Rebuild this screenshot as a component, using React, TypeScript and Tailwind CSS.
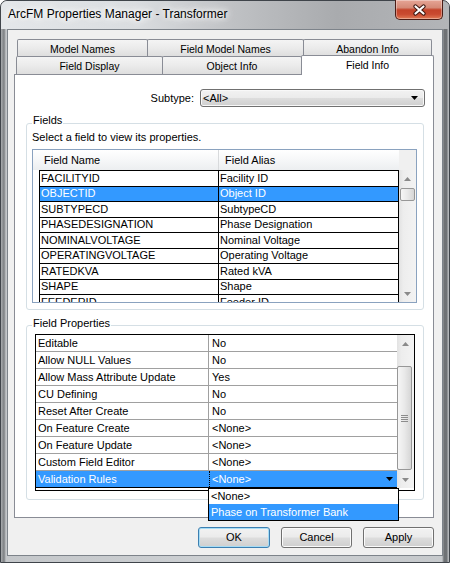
import React from "react";

const fieldRows: [string, string][] = [
  ["FACILITYID", "Facility ID"],
  ["OBJECTID", "Object ID"],
  ["SUBTYPECD", "SubtypeCD"],
  ["PHASEDESIGNATION", "Phase Designation"],
  ["NOMINALVOLTAGE", "Nominal Voltage"],
  ["OPERATINGVOLTAGE", "Operating Voltage"],
  ["RATEDKVA", "Rated kVA"],
  ["SHAPE", "Shape"],
  ["FEEDERID", "Feeder ID"],
];

const propRows: [string, string][] = [
  ["Editable", "No"],
  ["Allow NULL Values", "No"],
  ["Allow Mass Attribute Update", "Yes"],
  ["CU Defining", "No"],
  ["Reset After Create", "No"],
  ["On Feature Create", "<None>"],
  ["On Feature Update", "<None>"],
  ["Custom Field Editor", "<None>"],
  ["Validation Rules", "<None>"],
];

function TriUp({ c = "#8a8a8a" }: { c?: string }) {
  return (
    <svg width="7" height="4" viewBox="0 0 7 4" className="block">
      <path d="M3.5 0L7 4H0Z" fill={c} />
    </svg>
  );
}

function TriDown({ c = "#8a8a8a" }: { c?: string }) {
  return (
    <svg width="7" height="4" viewBox="0 0 7 4" className="block">
      <path d="M0 0H7L3.5 4Z" fill={c} />
    </svg>
  );
}

const tabCls =
  "h-full border border-b-0 border-[#898c95] rounded-t-[2px] bg-[linear-gradient(#f4f4f4,#ebebeb_50%,#dedede)] flex items-center justify-center text-[10.5px] pt-[2px]";

const btnCls =
  "h-[21px] rounded-[3px] border flex items-center justify-center bg-[linear-gradient(#f2f2f2,#ebebeb_48%,#dddddd_52%,#cfcfcf)]";

export default function App() {
  return (
    <div className="w-[450px] h-[563px] bg-white font-['Liberation_Sans',Arial,sans-serif] text-[11px] text-black leading-none select-none">
      <div className="relative w-[450px] h-[563px] rounded-t-[7px] border border-[#3f444a] flex flex-col bg-[linear-gradient(to_right,#a9acaf_0px,#7c7f82_3px,#c4c7ca_5px,#cdd0d3_50%,#c6c9cc_441px,#6f7275_443px,#707376_446px,#b3b6b9_447px)]">
        {/* Title bar */}
        <div className="h-[28px] shrink-0 rounded-t-[6px] bg-[linear-gradient(to_right,#e4e7ea,#dadde0_30%,#bfc1c4_52%,#a9abae_75%,#b3b5b8)] pl-[7px] pt-[6px]">
          <span className="text-[12px] leading-[14px] [text-shadow:0_0_5px_#fff,0_0_9px_#fff,0_0_12px_#fff]">
            ArcFM Properties Manager - Transformer
          </span>
        </div>

        {/* Close button */}
        <div className="absolute -top-px right-[6px] w-[48px] h-[20px] rounded-b-[5px] border border-t-0 border-[#4b1d16] bg-[linear-gradient(#e6a596,#d58a77_40%,#c4432a_52%,#c94a30_75%,#e07a55)] shadow-[inset_0_0_0_1px_rgba(255,255,255,0.35)] flex items-center justify-center">
          <svg width="15" height="12" viewBox="0 0 15 12" className="block">
            <path d="M3.5 2.5L11.5 9.5M11.5 2.5L3.5 9.5" stroke="#3d160f" strokeWidth="4.2" strokeLinecap="round" />
            <path d="M3.5 2.5L11.5 9.5M11.5 2.5L3.5 9.5" stroke="#ffffff" strokeWidth="2.2" strokeLinecap="round" />
          </svg>
        </div>

        {/* Client area */}
        <div className="mx-[6px] w-[436px] h-[527px] border border-[#7d838a] bg-[#f0f0f0] flex flex-col">
          <div className="ml-[6px] mt-[9px] w-[420px] flex flex-col">
            {/* Tab row 1 */}
            <div className="flex h-[17px] ml-[3px]">
              <div className={`w-[131px] ${tabCls}`}>Model Names</div>
              <div className={`w-[157px] -ml-px ${tabCls}`}>Field Model Names</div>
              <div className={`w-[129px] -ml-px ${tabCls}`}>Abandon Info</div>
            </div>
            {/* Tab row 2 */}
            <div className="flex items-end h-[18px] ml-[2px]">
              <div className={`w-[147px] ${tabCls}`}>Field Display</div>
              <div className={`w-[140px] -ml-px ${tabCls}`}>Object Info</div>
              <div className="relative z-10 w-[133px] -ml-px h-[20px] -mb-px border border-b-0 border-[#898c95] rounded-t-[2px] bg-white flex justify-center pt-[4px] text-[10.5px]">
                Field Info
              </div>
            </div>

            {/* Tab panel */}
            <div className="w-[420px] h-[444px] border border-[#898c95] bg-white flex flex-col">
              {/* Subtype */}
              <div className="flex justify-end items-center mt-[14px] pr-[8px]">
                <span className="mr-[6px]">Subtype:</span>
                <div className="w-[225px] h-[18px] border border-[#707070] rounded-[3px] bg-[linear-gradient(#f2f2f2,#ebebeb_48%,#dddddd_52%,#cfcfcf)] shadow-[inset_0_0_0_1px_#f8f8f8] flex items-center justify-between pl-[2px] pr-[6px]">
                  <span>&lt;All&gt;</span>
                  <TriDown c="#000" />
                </div>
              </div>

              {/* Fields group */}
              <div className="relative ml-[11px] mt-[16px] w-[398px] h-[187px] border border-[#d5dfe5] rounded-[3px] pt-[7px] pl-[5px]">
                <span className="absolute left-[5px] -top-[10px] px-[1px] bg-white leading-[13px]">Fields</span>
                <div className="leading-[13px]">Select a field to view its properties.</div>
                <div className="mt-[5px] w-[385px] h-[154px] border border-[#8aa2bf] flex">
                  <div className="w-[366px] flex flex-col">
                    {/* header */}
                    <div className="h-[20px] flex bg-[linear-gradient(#ffffff,#f7f8f9_45%,#eceef0)]">
                      <div className="w-[6px]" />
                      <div className="w-[180px] border-r border-[#d8dadc] pl-[5px] flex items-center">Field Name</div>
                      <div className="flex-1 pl-[6px] flex items-center">Field Alias</div>
                    </div>
                    {/* body */}
                    <div className="h-[132px] overflow-hidden flex">
                      <div className="w-[6px] bg-white" />
                      <div className="w-[360px] border-x border-black">
                        {fieldRows.map(([n, a]) => {
                          const sel = n === "OBJECTID";
                          return (
                            <div
                              key={n}
                              className={`h-[15.5px] border-t border-black flex ${sel ? "bg-[#3399ff] text-white" : "bg-white"}`}
                            >
                              <div className="w-[179px] border-r border-black pl-[1px] flex items-center">{n}</div>
                              <div className="flex-1 pl-[1px] flex items-center">{a}</div>
                            </div>
                          );
                        })}
                      </div>
                    </div>
                  </div>
                  {/* scrollbar */}
                  <div className="w-[17px] flex flex-col">
                    <div className="h-[20px] bg-[#f0f0f0]" />
                    <div className="flex-1 flex flex-col bg-[linear-gradient(to_right,#e2e2e2,#ededed_25%,#f3f3f3)]">
                      <div className="h-[17px] flex items-center justify-center">
                        <TriUp />
                      </div>
                      <div className="mt-[1px] ml-px w-[15px] h-[13px] rounded-[2px] border border-[#979797] bg-[linear-gradient(to_right,#f6f6f6,#e9e9e9_50%,#d6d6d6)]" />
                      <div className="flex-1" />
                      <div className="h-[17px] flex items-center justify-center">
                        <TriDown />
                      </div>
                    </div>
                  </div>
                </div>
              </div>

              {/* Field Properties group */}
              <div className="relative ml-[11px] mt-[15px] w-[398px] h-[175px] border border-[#d5dfe5] rounded-[3px] pt-[8px] pl-[8px]">
                <span className="absolute left-[5px] -top-[9px] px-[1px] bg-white leading-[13px]">Field Properties</span>
                <div className="w-[380px] h-[157px] border border-black bg-white flex flex-col">
                  <div className="h-[153px] flex">
                    <div className="w-[361px] flex flex-col">
                      {propRows.map(([n, v], i) => {
                        const sel = i === propRows.length - 1;
                        if (sel) {
                          return (
                            <div key={n} className="relative h-[17px] border-b border-black flex">
                              <div className="w-[173px] bg-[#3399ff] text-white pl-[2px] flex items-center">{n}</div>
                              <div className="flex-1 bg-[#3399ff] text-white border-l border-dotted border-black pl-[2px] pr-[4px] flex items-center justify-between">
                                <span>{v}</span>
                                <TriDown c="#000" />
                              </div>
                              {/* dropdown list */}
                              <div className="absolute z-20 left-[172px] top-[17px] w-[191px] h-[33px] border border-black bg-white flex flex-col">
                                <div className="h-[15px] pl-[2px] flex items-center">&lt;None&gt;</div>
                                <div className="h-[16px] pl-[2px] bg-[#3399ff] text-white flex items-center">
                                  Phase on Transformer Bank
                                </div>
                              </div>
                            </div>
                          );
                        }
                        return (
                          <div key={n} className="h-[17px] border-b border-[#a0a0a0] flex">
                            <div className="w-[173px] border-r border-[#a0a0a0] pl-[2px] flex items-center">{n}</div>
                            <div className="flex-1 pl-[3px] flex items-center">{v}</div>
                          </div>
                        );
                      })}
                    </div>
                    {/* scrollbar */}
                    <div className="w-[17px] flex flex-col bg-[linear-gradient(to_right,#e2e2e2,#ededed_25%,#f3f3f3)]">
                      <div className="h-[17px] flex items-center justify-center">
                        <TriUp />
                      </div>
                      <div className="h-[14px]" />
                      <div className="w-[15px] h-[104px] rounded-[2px] border border-[#979797] bg-[linear-gradient(to_right,#f6f6f6,#e9e9e9_50%,#d6d6d6)] flex flex-col items-center justify-center gap-[1px]">
                        <div className="w-[7px] h-px bg-[#8c8c8c]" />
                        <div className="w-[7px] h-px bg-[#8c8c8c]" />
                        <div className="w-[7px] h-px bg-[#8c8c8c]" />
                        <div className="w-[7px] h-px bg-[#8c8c8c]" />
                      </div>
                      <div className="flex-1" />
                      <div className="h-[17px] flex items-center justify-center">
                        <TriDown />
                      </div>
                    </div>
                  </div>
                </div>
              </div>
            </div>
          </div>

          {/* Buttons */}
          <div className="mt-[9px] pr-[8px] flex justify-end gap-[11px]">
            <div className={`w-[72px] border-[#3c7fb1] shadow-[inset_0_0_0_1px_#a6dcf5] ${btnCls}`}>OK</div>
            <div className={`w-[71px] border-[#707070] shadow-[inset_0_0_0_1px_#fbfbfb] ${btnCls}`}>Cancel</div>
            <div className={`w-[71px] border-[#707070] shadow-[inset_0_0_0_1px_#fbfbfb] ${btnCls}`}>Apply</div>
          </div>
        </div>
      </div>
    </div>
  );
}
